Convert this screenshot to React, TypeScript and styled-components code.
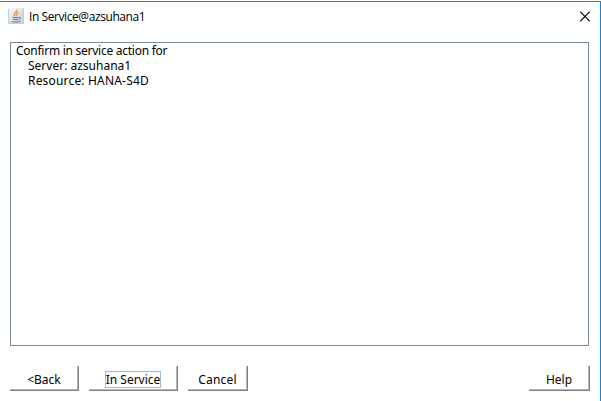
import React from "react";
import styled, { createGlobalStyle } from "styled-components";

const GlobalStyle = createGlobalStyle`
  html, body { margin: 0; background: #fff; overflow: hidden; }
  * { box-sizing: border-box; }
`;

const Dialog = styled.main`
  width: 601px;
  height: 401px;
  display: flex;
  flex-direction: column;
  padding-top: 1px;
  background: #fff;
  color: #000;
  font: 12px/15px "Noto Sans", "Open Sans", sans-serif;
`;

const Frame = styled.div`
  flex: 1;
  display: flex;
  flex-direction: column;
  border-top: 1px solid #1883d7;
  border-right: 1px solid #1883d7;
`;

const TitleBar = styled.header`
  height: 40px;
  display: flex;
  align-items: flex-start;
  padding: 6px 10px 0 8px;
`;

const Title = styled.h1`
  flex: 1;
  margin: 1px 0 0 5px;
  font: 12px/16px "Open Sans", "Noto Sans", sans-serif;
  letter-spacing: -0.42px;
`;

const CloseButton = styled.button`
  display: flex;
  margin: 3px 0 0;
  padding: 0;
  border: 0;
  background: none;
`;

const MessageArea = styled.section`
  width: 579px;
  height: 304px;
  margin-left: 10px;
  padding: 0 5px;
  border: 1px solid #7a8a99;
`;

const Line = styled.p<{ $indent?: boolean; $spacing: number }>`
  margin: 0;
  height: 15px;
  padding-left: ${(p) => (p.$indent ? 12 : 0)}px;
  letter-spacing: ${(p) => p.$spacing}px;
  white-space: nowrap;
`;

const Actions = styled.footer`
  display: flex;
  gap: 10px;
  padding: 20px 10px 0;
`;

const ActionButton = styled.button<{ $width: number; $end?: boolean; $spacing?: number }>`
  width: ${(p) => p.$width}px;
  height: 25px;
  display: flex;
  align-items: center;
  justify-content: center;
  margin-left: ${(p) => (p.$end ? "auto" : "0")};
  padding: 2px 1px 0 0;
  border: 0;
  background: #fff;
  box-shadow: inset -1px -1px #808080, inset -2px -2px #b8b8b8;
  color: #000;
  font: 12px/15px "Noto Sans", "Open Sans", sans-serif;
  letter-spacing: ${(p) => p.$spacing ?? 0}px;
  white-space: nowrap;
`;

const FocusLabel = styled.span`
  width: 56px;
  height: 17px;
  display: flex;
  align-items: center;
  justify-content: center;
  border: 1px solid #a3b8cc;
`;

const JavaIcon = () => (
  <svg width="16" height="16" viewBox="0 0 16 16" fill="none">
    <defs>
      <linearGradient id="tile" x1="0" y1="0" x2="1" y2="1">
        <stop stopColor="#fbfcfd" />
        <stop offset="1" stopColor="#bccbd8" />
      </linearGradient>
    </defs>
    <path fill="url(#tile)" d="M0 0h16v16H0z" />
    <path stroke="#c3ced8" d="M.5 15.5V.5M.5 15.5h15V.5" />
    <path stroke="#f08a3a" strokeWidth="1.2" d="M8.8 1.8C10 4 4 5 7.2 8.2M10.3 4.3C7.5 5.6 9 6.8 8.2 7.8" />
    <path stroke="#55799a" d="M4.5 9.5h6M5 11.5h5M3.5 13.5c2 .8 6 .8 8.5-.2M11 9.5c2-.8 2.2 1 0 1.8" />
  </svg>
);

export default function App() {
  return (
    <>
      <GlobalStyle />
      <Dialog>
        <Frame>
          <TitleBar>
            <JavaIcon />
            <Title>In Service@azsuhana1</Title>
            <CloseButton aria-label="Close">
              <svg width="10" height="11" viewBox="0 0 10 11">
                <path d="M.2 .7l9.6 9.6M9.8 .7l-9.6 9.6" stroke="#000" strokeWidth="1.1" />
              </svg>
            </CloseButton>
          </TitleBar>
          <MessageArea>
            <Line $spacing={-0.26}>Confirm in service action for</Line>
            <Line $indent $spacing={0}>Server: azsuhana1</Line>
            <Line $indent $spacing={0.18}>Resource: HANA-S4D</Line>
          </MessageArea>
          <Actions>
            <ActionButton $width={69}>&lt;Back</ActionButton>
            <ActionButton $width={89}><FocusLabel>In Service</FocusLabel></ActionButton>
            <ActionButton $width={60} $spacing={0.2}>Cancel</ActionButton>
            <ActionButton $width={61} $end>Help</ActionButton>
          </Actions>
        </Frame>
      </Dialog>
    </>
  );
}
